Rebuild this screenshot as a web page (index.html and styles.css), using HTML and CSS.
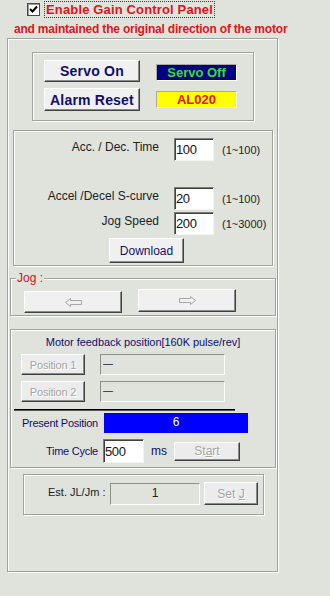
FILE: index.html
```html
<!DOCTYPE html>
<html>
<head>
<meta charset="utf-8">
<link rel="stylesheet" href="styles.css">
</head>
<body>
<div class="head">
  <span class="check"><svg width="9" height="9" viewBox="0 0 9 9"><polyline points="1,4 3.5,6.5 8,1.5" fill="none" stroke="#000" stroke-width="2"/></svg></span>
  <span class="title">Enable Gain Control Panel</span>
</div>
<div class="subtitle">and maintained the original direction of the motor</div>

<div class="outer">
  <div class="panel p-servo">
    <button class="btn btn-big">Servo On</button>
    <div class="status status-off">Servo Off</div>
    <button class="btn btn-big">Alarm Reset</button>
    <div class="status status-alarm">AL020</div>
  </div>

  <div class="panel p-params">
    <div class="prow r1"><span class="plabel">Acc. / Dec. Time</span><input class="field" type="text" value="100"><span class="range">(1~100)</span></div>
    <div class="prow r2"><span class="plabel">Accel /Decel S-curve</span><input class="field" type="text" value="20"><span class="range">(1~100)</span></div>
    <div class="prow r3"><span class="plabel">Jog Speed</span><input class="field" type="text" value="200"><span class="range">(1~3000)</span></div>
    <button class="btn btn-dl">Download</button>
  </div>

  <fieldset class="jog">
    <legend>Jog :</legend>
    <div class="jog-row">
      <button class="btn jog-btn jog-left"><svg width="17" height="9" viewBox="0 0 17 9"><path d="M0.5 4.5 L5.5 0.5 V2.5 H16.5 V6.5 H5.5 V8.5 Z" fill="none" stroke="#a6a6a6"/></svg></button>
      <button class="btn jog-btn jog-right"><svg width="17" height="9" viewBox="0 0 17 9"><path d="M16.5 4.5 L11.5 0.5 V2.5 H0.5 V6.5 H11.5 V8.5 Z" fill="none" stroke="#a6a6a6"/></svg></button>
    </div>
  </fieldset>

  <div class="panel p-motor">
    <div class="m-title">Motor feedback position[160K pulse/rev]</div>
    <div class="pos-row first">
      <button class="btn btn-pos disabled">Position 1</button>
      <div class="pos-field">—</div>
    </div>
    <div class="pos-row second">
      <button class="btn btn-pos disabled">Position 2</button>
      <div class="pos-field">—</div>
    </div>
    <div class="sep"></div>
    <div class="present-row">
      <span class="m-label">Present Position</span>
      <div class="present-bar">6</div>
    </div>
    <div class="cycle-row">
      <span class="m-label">Time Cycle</span>
      <input class="field field-cycle" type="text" value="500">
      <span class="ms">ms</span>
      <button class="btn btn-start disabled">St<u>a</u>rt</button>
    </div>
  </div>

  <div class="panel p-est">
    <span class="est-label">Est. JL/Jm :</span>
    <div class="est-field">1</div>
    <button class="btn btn-setj disabled">Set <u>J</u></button>
  </div>
</div>
</body>
</html>
```
FILE: styles.css
```css
* { box-sizing: border-box; }

body {
  margin: 0;
  width: 330px;
  height: 596px;
  overflow: hidden;
  background: #dfe3dc;
  font-family: "Liberation Sans", Arial, sans-serif;
  font-size: 12px;
  color: #1a1a1a;
}

button, input {
  font-family: "Liberation Sans", Arial, sans-serif;
  margin: 0;
}

/* header */
.head {
  display: flex;
  align-items: center;
  height: 18px;
  padding-left: 27px;
}

.check {
  width: 13px;
  height: 13px;
  background: #fff;
  border: 1px solid #4a4a4a;
  box-shadow: inset 1px 1px 0 #9a9a9a;
  display: flex;
  align-items: center;
  justify-content: center;
}

.title {
  margin-left: 4px;
  height: 17px;
  padding: 0 1px;
  border: 1px dotted #3a3a3a;
  color: #e3121b;
  font-weight: bold;
  font-size: 13px;
  letter-spacing: 0.15px;
  line-height: 15px;
}

.subtitle {
  margin: 4px 0 0 14px;
  color: #e3121b;
  font-weight: bold;
  font-size: 12px;
  line-height: 14px;
  letter-spacing: -0.2px;
  white-space: nowrap;
}

/* outer group */
.outer {
  margin: 2px 0 0 7px;
  width: 271px;
  height: 534px;
  border: 1px solid #9ea39c;
  box-shadow: 1px 1px 0 #fff, inset 1px 1px 0 #fff;
}

.panel {
  border: 1px solid #9ea39c;
  box-shadow: 1px 1px 0 #fff, inset 1px 1px 0 #fff;
}

/* buttons */
.btn {
  background: #f0f0f0;
  border: 1px solid;
  border-color: #fff #404040 #404040 #fff;
  box-shadow: inset -1px -1px 0 #8a8a8a;
  padding: 0;
  color: #0a0a6e;
  font-size: 12px;
  cursor: default;
}

.btn.disabled {
  color: #a4a4a4;
  text-shadow: 1px 1px 0 #fff;
  background: #ececec;
}

/* servo panel */
.p-servo {
  margin: 13px 0 0 24px;
  width: 222px;
  height: 69px;
  padding: 7px 0 0 11px;
  display: grid;
  grid-template-columns: 96px 81px;
  grid-template-rows: 22px 23px;
  column-gap: 16px;
  row-gap: 6px;
}

.btn-big {
  font-size: 14px;
  font-weight: bold;
  color: #0f0f6a;
  letter-spacing: 0.2px;
}

.status {
  height: 17px;
  border: 1px solid;
  border-color: #a8a8a8 #fff #fff #a8a8a8;
  text-align: center;
  font-weight: bold;
  font-size: 13px;
  line-height: 15px;
}

.status-off {
  margin-top: 4px;
  background: #000080;
  color: #2fe02f;
}

.status-alarm {
  margin-top: 3px;
  background: #ffff00;
  color: #e8141e;
}

/* params panel */
.p-params {
  margin: 9px 0 0 5px;
  width: 260px;
  height: 136px;
  padding-top: 7px;
}

.prow {
  display: flex;
  align-items: flex-start;
  height: 23px;
}

.prow.r2 { margin-top: 26px; }
.prow.r3 { margin-top: 2px; }

.plabel {
  width: 145px;
  text-align: right;
  line-height: 14px;
  padding-top: 2px;
  color: #222;
  white-space: nowrap;
}

.field {
  width: 40px;
  height: 23px;
  margin-left: 15px;
  padding: 0 0 0 1px;
  background: #fff;
  border: 1px solid;
  border-color: #7b7b7b #f4f4f4 #f4f4f4 #7b7b7b;
  box-shadow: inset 1px 1px 0 #404040;
  font-size: 13px;
  letter-spacing: -0.4px;
  color: #111;
  outline: none;
}

.range {
  align-self: center;
  margin-left: 8px;
  font-size: 11px;
  color: #222;
}

.btn-dl {
  display: block;
  margin: 3px 0 0 95px;
  width: 75px;
  height: 25px;
  color: #101070;
}

/* jog */
.jog {
  margin: 5px 0 0 2px;
  width: 266px;
  min-inline-size: 0;
  padding: 0 0 2px 5px;
  border: 1px solid #9ea39c;
  box-shadow: 1px 1px 0 #fff, inset 1px 1px 0 #fff;
}

.jog legend {
  padding: 0 1px;
  margin: 0;
  color: #d0101a;
  font-size: 12px;
  line-height: 14px;
  background: #dfe3dc;
}

.jog-row {
  display: flex;
  align-items: flex-start;
  margin: 4px 0 0 8px;
}

.jog-btn {
  width: 98px;
  display: flex;
  align-items: center;
  justify-content: center;
}

.jog-left {
  height: 22px;
  margin-top: 2px;
}

.jog-right {
  height: 23px;
  margin-left: 16px;
}

/* motor panel */
.p-motor {
  margin: 13px 0 0 2px;
  width: 266px;
  height: 139px;
  padding: 5px 0 0 10px;
}

.m-title {
  text-align: center;
  margin-left: -10px;
  font-size: 11px;
  line-height: 14px;
  letter-spacing: -0.05px;
  color: #0f0f6a;
}

.pos-row {
  display: flex;
  align-items: center;
}

.pos-row.first { margin-top: 5px; }
.pos-row.second { margin-top: 6px; }

.btn-pos {
  width: 64px;
  height: 21px;
  font-size: 11px;
  letter-spacing: -0.2px;
}

.pos-field {
  width: 125px;
  height: 21px;
  margin-left: 15px;
  border: 1px solid;
  border-color: #8e8e8e #fff #fff #8e8e8e;
  padding-left: 2px;
  font-size: 10px;
  line-height: 17px;
  color: #1a1a4a;
}

.sep {
  margin: 7px 0 0 -7px;
  width: 221px;
  height: 2px;
  border-top: 1px solid #000;
  border-bottom: 1px solid #555;
}

.present-row {
  display: flex;
  align-items: center;
  margin-top: 2px;
}

.m-label {
  width: 87px;
  margin-left: -10px;
  text-align: right;
  font-size: 11px;
  letter-spacing: -0.25px;
  color: #0f0f6a;
  white-space: nowrap;
}

.present-bar {
  width: 144px;
  height: 20px;
  margin-left: 6px;
  background: #0000ff;
  color: #fff;
  text-align: center;
  font-size: 12px;
  line-height: 18px;
}

.cycle-row {
  display: flex;
  align-items: center;
  margin-top: 6px;
}

.field-cycle {
  width: 41px;
  height: 24px;
  margin-left: 5px;
}

.ms {
  margin-left: 7px;
  font-size: 12px;
  color: #0f0f6a;
}

.btn-start {
  width: 66px;
  height: 19px;
  margin-left: 7px;
}

/* est panel */
.p-est {
  margin: 6px 0 0 15px;
  width: 241px;
  height: 41px;
  padding: 7px 0 0 24px;
  display: flex;
  align-items: flex-start;
}

.est-label {
  width: 57px;
  margin-top: 4px;
  font-size: 11px;
  color: #222;
  white-space: nowrap;
}

.est-field {
  width: 90px;
  height: 22px;
  margin: 1px 0 0 5px;
  border: 1px solid;
  border-color: #8e8e8e #fff #fff #8e8e8e;
  text-align: center;
  line-height: 18px;
  font-size: 12px;
  color: #222;
}

.btn-setj {
  width: 54px;
  height: 23px;
  margin-left: 4px;
}
```
